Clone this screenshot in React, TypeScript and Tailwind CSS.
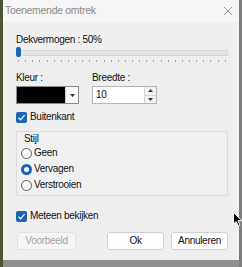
import React from "react";

const font = { fontFamily: '"Liberation Sans", Arial, sans-serif' };
const txt = "text-[10px] tracking-[-0.3px] text-[#111111]";

function Check({ label }: { label: string }) {
  return (
    <div className="flex items-center h-[14px] gap-[3px]">
      <div className="w-[11px] h-[11px] rounded-[2px] bg-[#1c64b4] flex items-center justify-center">
        <svg width="9" height="9" viewBox="0 0 9 9">
          <path d="M1.5 4.8 L3.6 6.8 L7.6 2.2" stroke="white" strokeWidth="1.2" fill="none" />
        </svg>
      </div>
      <span className={`${txt} leading-[14px]`}>{label}</span>
    </div>
  );
}

function Radio({ label, checked }: { label: string; checked?: boolean }) {
  return (
    <div className="flex items-center h-[16px] gap-[2px]">
      {checked ? (
        <div className="w-[11px] h-[11px] rounded-full bg-[#1c64b4] flex items-center justify-center">
          <div className="w-[5px] h-[5px] rounded-full bg-white" />
        </div>
      ) : (
        <div className="w-[11px] h-[11px] rounded-full border border-[#5c5c5c] bg-[#f7f7f7]" />
      )}
      <span className={`${txt} leading-[14px]`}>{label}</span>
    </div>
  );
}

export default function App() {
  const ticks = Array.from({ length: 30 }, (_, i) => i);
  return (
    <div className="relative w-[242px] h-[267px] bg-[#8f8f8f] overflow-hidden flex" style={font}>
      <div className="w-[3px] h-full bg-[#4a5636]" />
      <div className="w-[236px] h-[260px] bg-[#efefef] flex flex-col">
        <div className="h-[22px] bg-[#f6f6f6] flex items-center pl-[2px] pr-[6px] justify-between">
          <span className="text-[10.5px] tracking-[-0.3px] text-[#8a8a8a]">Toenemende omtrek</span>
          <svg width="10" height="10" viewBox="0 0 10 10">
            <path d="M1 1 L9 9 M9 1 L1 9" stroke="#9a9a9a" strokeWidth="1" />
          </svg>
        </div>
        <div className="pl-[13px] pr-[11px] flex flex-col">
          <div className={`mt-[11px] h-[14px] leading-[14px] ${txt}`}>Dekvermogen : 50%</div>
          <div className="relative h-[11px] flex items-center">
            <div className="w-full h-[6px] bg-[#e6e6e6] border border-[#d5d5d5]" />
            <div className="absolute left-[0px] top-[0px] w-[5px] h-[10px] rounded-[2px] bg-[#1c64b4]" />
          </div>
          <div className="mt-[2px] h-[2px] flex justify-between px-[2px]">
            {ticks.map((t) => (
              <div key={t} className="w-[1px] h-[2px] bg-[#a0a0a0]" />
            ))}
          </div>
          <div className="mt-[9px] flex gap-[13px]">
            <div className="w-[63px]">
              <div className={`h-[14px] leading-[14px] ${txt}`}>Kleur :</div>
              <div className="mt-[1px] h-[18px] border border-[#8a8a8a] flex bg-white">
                <div className="flex-1 bg-black" />
                <div className="w-[13px] flex items-center justify-center bg-[#fbfbfb] border-l border-[#cfcfcf]">
                  <svg width="5" height="3" viewBox="0 0 5 3"><path d="M0 0 L5 0 L2.5 3 Z" fill="#333" /></svg>
                </div>
              </div>
            </div>
            <div className="w-[65px]">
              <div className={`h-[14px] leading-[14px] ${txt}`}>Breedte :</div>
              <div className="mt-[1px] h-[18px] border border-[#b5b5b5] flex bg-white">
                <div className={`flex-1 pl-[3px] leading-[16px] ${txt}`}>10</div>
                <div className="w-[12px] flex flex-col border-l border-[#d5d5d5]">
                  <div className="flex-1 flex items-center justify-center bg-[#f3f3f3] border-b border-[#d5d5d5]">
                    <svg width="5" height="3" viewBox="0 0 5 3"><path d="M0 3 L5 3 L2.5 0 Z" fill="#333" /></svg>
                  </div>
                  <div className="flex-1 flex items-center justify-center bg-[#f3f3f3]">
                    <svg width="5" height="3" viewBox="0 0 5 3"><path d="M0 0 L5 0 L2.5 3 Z" fill="#333" /></svg>
                  </div>
                </div>
              </div>
            </div>
          </div>
          <div className="mt-[6px]">
            <Check label="Buitenkant" />
          </div>
          <div className="mt-[7px] border border-[#dcdcdc] rounded-[2px] bg-[#f1f1f1] pl-[4px] pb-[2px]">
            <div className={`pl-[3px] h-[13px] leading-[13px] ${txt}`}>Stijl</div>
            <Radio label="Geen" />
            <Radio label="Vervagen" checked />
            <Radio label="Verstrooien" />
          </div>
          <div className="mt-[13px]">
            <Check label="Meteen bekijken" />
          </div>
          <div className="mt-[9px] flex">
            <div className="w-[59px] h-[18px] ml-[1px] rounded-[3px] border border-[#e2e2e2] bg-[#f6f6f6] text-[10px] tracking-[-0.3px] leading-[16px] text-[#a3a3a3] text-center">Voorbeeld</div>
            <div className={`ml-auto w-[57px] h-[18px] rounded-[3px] border border-[#d0d0d0] bg-[#fdfdfd] leading-[16px] text-center ${txt}`}>Ok</div>
            <div className={`ml-[7px] w-[57px] h-[18px] rounded-[3px] border border-[#d0d0d0] bg-[#fdfdfd] leading-[16px] text-center ${txt}`}>Annuleren</div>
          </div>
        </div>
      </div>
      <div className="flex-1 bg-[#7d7d7d]" />
      <svg className="absolute left-[233px] top-[212px]" width="10" height="15" viewBox="0 0 10 15">
        <path d="M0.5 0.5 L0.5 12 L3.2 9.4 L5.2 14 L7 13.2 L5 8.8 L9 8.8 Z" fill="black" stroke="white" strokeWidth="1" />
      </svg>
    </div>
  );
}
